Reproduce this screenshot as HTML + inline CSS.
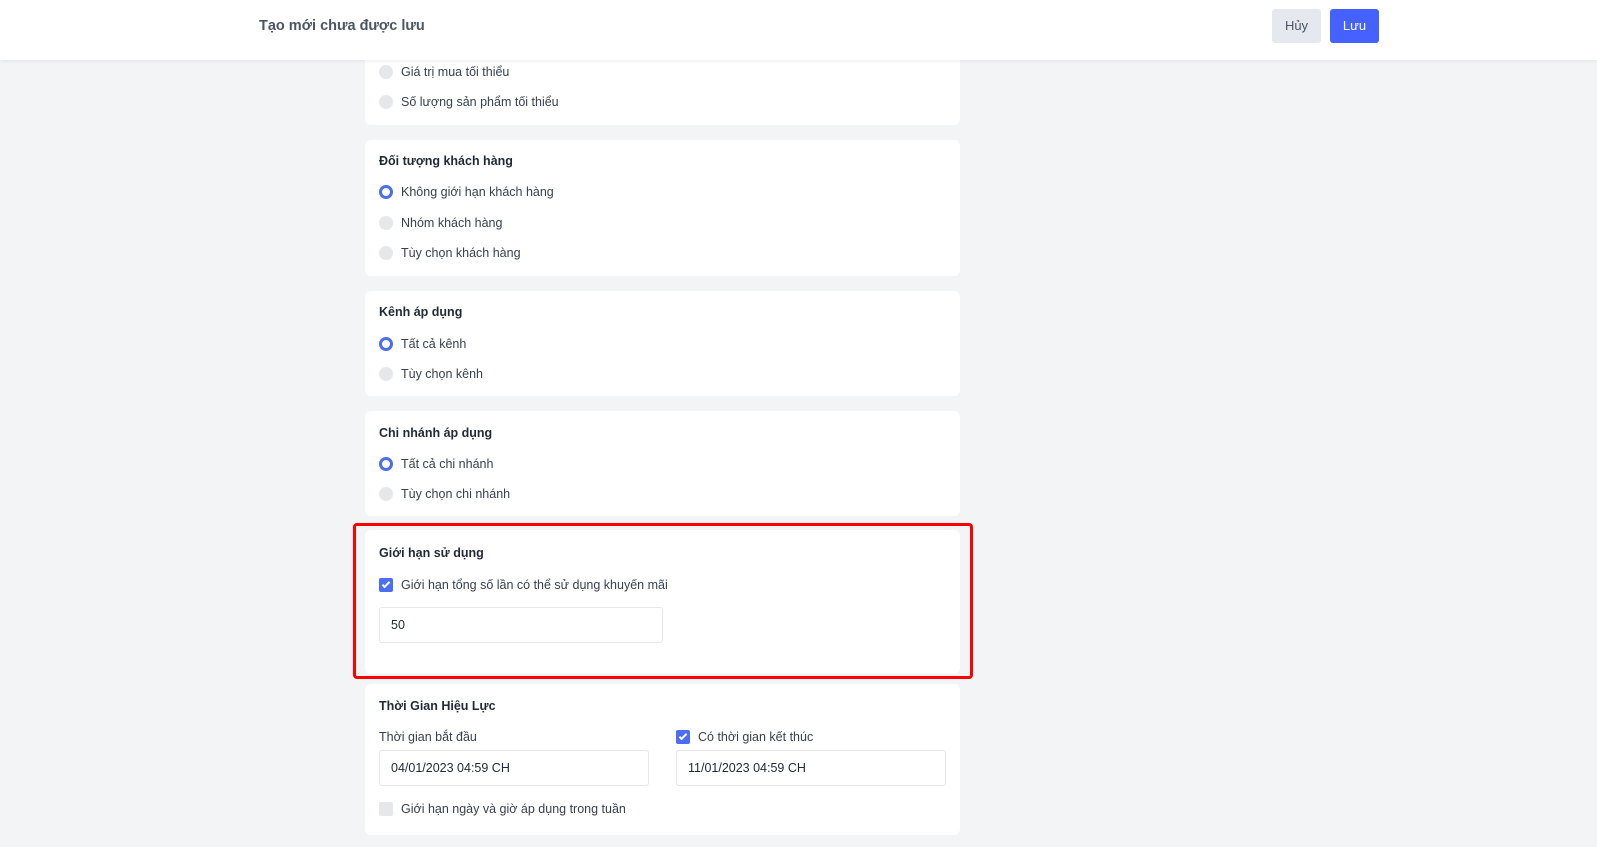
<!DOCTYPE html><html><head><meta charset="utf-8"><style>
*,*::before,*::after{box-sizing:border-box;margin:0;padding:0}
body{width:1597px;height:847px;overflow:hidden;background:#f3f4f6;font-family:"Liberation Sans",Arial,sans-serif;font-size:12.5px;color:#374151;position:relative}
.hdr{position:absolute;left:0;top:0;width:1597px;height:60px;background:#fff;box-shadow:0 1px 4px rgba(0,0,0,.08);z-index:5}
.hdr .t{position:absolute;left:259px;top:18px;font-size:14.5px;color:#4b5563;font-weight:bold}
.btn{position:absolute;top:9px;height:34px;width:49px;border-radius:3px;font-size:13px;text-align:center;line-height:34px}
.card{position:absolute;left:365px;width:595px;background:#fff;border-radius:6px}
.ttl{position:absolute;left:14px;font-weight:bold;color:#1f2937;font-size:12.5px}
.row{position:absolute;left:14px;height:16px;line-height:16px;padding-left:22px}
.row::before{content:"";position:absolute;left:0;top:1px;width:14px;height:14px;border-radius:50%;background:#e5e7eb}
.row.on::before{background:#fff;border:3.5px solid #4c6ef5}
.cb::before{border-radius:2px}
.cb.on::before{background:#4c6ef5;border:none}
.cb.on::after{content:"";position:absolute;left:5px;top:3px;width:4px;height:8px;border:solid #fff;border-width:0 2px 2px 0;transform:rotate(45deg)}
.inp{position:absolute;height:36px;border:1px solid #e5e7eb;border-radius:3px;padding-left:11px;line-height:34px;color:#1f2937}
</style></head><body>
<div class="hdr"><div class="t">Tạo mới chưa được lưu</div>
<div class="btn" style="left:1272px;background:#e5e9ef;color:#4b5563">Hủy</div>
<div class="btn" style="left:1330px;background:#4561ff;color:#fff">Lưu</div></div>

<div class="card" style="top:20px;height:105px">
<div class="row" style="top:44px">Giá trị mua tối thiểu</div>
<div class="row" style="top:74px">Số lượng sản phẩm tối thiểu</div></div>

<div class="card" style="top:140px;height:136px">
<div class="ttl" style="top:14px">Đối tượng khách hàng</div>
<div class="row on" style="top:44px">Không giới hạn khách hàng</div>
<div class="row" style="top:75px">Nhóm khách hàng</div>
<div class="row" style="top:105px">Tùy chọn khách hàng</div></div>

<div class="card" style="top:291px;height:105px">
<div class="ttl" style="top:14px">Kênh áp dụng</div>
<div class="row on" style="top:45px">Tất cả kênh</div>
<div class="row" style="top:75px">Tùy chọn kênh</div></div>

<div class="card" style="top:411px;height:105px">
<div class="ttl" style="top:15px">Chi nhánh áp dụng</div>
<div class="row on" style="top:45px">Tất cả chi nhánh</div>
<div class="row" style="top:75px">Tùy chọn chi nhánh</div></div>

<div style="position:absolute;left:353px;top:523px;width:620px;height:156px;border:3px solid #f00;border-radius:4px"></div>
<div class="card" style="top:530px;height:144px">
<div class="ttl" style="top:16px">Giới hạn sử dụng</div>
<div class="row cb on" style="top:47px">Giới hạn tổng số lần có thể sử dụng khuyến mãi</div>
<div class="inp" style="left:14px;top:77px;width:284px">50</div></div>

<div class="card" style="top:684px;height:151px">
<div class="ttl" style="top:15px">Thời Gian Hiệu Lực</div>
<div style="position:absolute;left:14px;top:46px">Thời gian bắt đầu</div>
<div class="row cb on" style="left:311px;top:45px">Có thời gian kết thúc</div>
<div class="inp" style="left:14px;top:66px;width:270px">04/01/2023 04:59 CH</div>
<div class="inp" style="left:311px;top:66px;width:270px">11/01/2023 04:59 CH</div>
<div class="row cb" style="top:117px">Giới hạn ngày và giờ áp dụng trong tuần</div></div>
</body></html>
